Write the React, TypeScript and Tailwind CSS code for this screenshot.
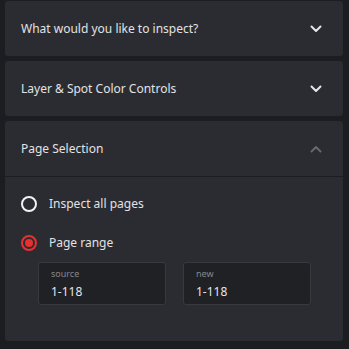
import React from "react";

const font = { fontFamily: '"Noto Sans", "Open Sans", sans-serif' };

const Chevron = ({ up = false }: { up?: boolean }) => (
  <svg
    width="12"
    height="8"
    viewBox="0 0 12 8"
    className={up ? "text-[#66676c]" : "text-[#e6e6e8]"}
  >
    <path
      d={up ? "M1.5 6.5 L6 2 L10.5 6.5" : "M1.5 1.5 L6 6 L10.5 1.5"}
      fill="none"
      stroke="currentColor"
      strokeWidth="2"
      strokeLinecap="round"
      strokeLinejoin="round"
    />
  </svg>
);

const Header = ({ title, open = false }: { title: string; open?: boolean }) => (
  <div className="h-[55px] flex items-center justify-between pl-4 pr-[21px]">
    <span className="text-[12px] text-[#e2e2e4]">{title}</span>
    <Chevron up={open} />
  </div>
);

const Radio = ({ label, checked = false }: { label: string; checked?: boolean }) => (
  <div className="flex items-center gap-3 h-4">
    {checked ? (
      <span className="w-4 h-4 rounded-full border-2 border-[#e8302f] flex items-center justify-center">
        <span className="w-2 h-2 rounded-full bg-[#e8302f]" />
      </span>
    ) : (
      <span className="w-4 h-4 rounded-full border-2 border-[#f2f2f2]" />
    )}
    <span className="text-[12px] text-[#e2e2e4]">{label}</span>
  </div>
);

const Field = ({ label, value }: { label: string; value: string }) => (
  <div className="h-[43px] flex-1 rounded-[3px] border border-[#38393e] bg-[#202125] pl-3 pt-[4px]">
    <div className="text-[9px] leading-[14px] text-[#86878c]">{label}</div>
    <div className="text-[12px] leading-[18px] text-[#e6e6e8] mt-[2px]">{value}</div>
  </div>
);

export default function App() {
  return (
    <div
      style={font}
      className="w-[349px] h-[349px] bg-[#1c1d21] pt-px pl-[5px] pr-[6px] flex flex-col gap-[5px] overflow-hidden"
    >
      <div className="bg-[#2b2c31] rounded-[3px]">
        <Header title="What would you like to inspect?" />
      </div>
      <div className="bg-[#2b2c31] rounded-[3px]">
        <Header title="Layer & Spot Color Controls" />
      </div>
      <div className="bg-[#2b2c31] rounded-[3px]">
        <div className="border-b border-[#1c1d21]">
          <Header title="Page Selection" open />
        </div>
        <div className="h-[164px] pl-4 pt-[19px]">
          <div className="flex flex-col gap-[23px]">
            <Radio label="Inspect all pages" />
            <Radio label="Page range" checked />
          </div>
          <div className="flex gap-[17px] pl-[17px] pr-[32px] mt-[11px]">
            <Field label="source" value="1-118" />
            <Field label="new" value="1-118" />
          </div>
        </div>
      </div>
    </div>
  );
}
